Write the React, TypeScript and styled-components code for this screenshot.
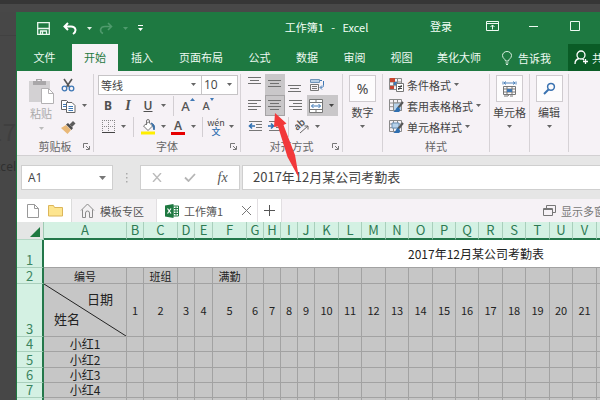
import React from "react";
import styled, { createGlobalStyle, css } from "styled-components";

const GREEN = "#1e7941";
const SANS = '"Noto Sans CJK SC", "Noto Sans", sans-serif';

const GlobalStyle = createGlobalStyle`
  * { box-sizing: border-box; }
  html, body { margin: 0; height: 100%; }
  #root { height: 100%; }
  body { font: 11px/14px ${SANS}; color: #444; background: #474747; overflow: hidden; }
  button, input, select { font: inherit; color: inherit; margin: 0; padding: 0; border: 0; background: none; border-radius: 0; }
  svg { display: block; flex: none; }
`;

/* Page frame */
const Desktop = styled.div`
  display: flex;
  flex-direction: column;
  min-height: 100%;
  height: 100%;
  overflow: hidden;
`;
const TopStrip = styled.div`
  flex: none;
  height: 12px;
  background: #484848;
  border-top: 4px solid #363636;
`;
const Body = styled.div`
  flex: 1;
  display: flex;
  min-height: 0;
`;
const Rail = styled.aside`
  flex: none;
  width: 16px;
  margin-top: 23px;
  padding-top: 80px;
  border-top: 1px solid #414141;
  overflow: hidden;
  display: flex;
  flex-direction: column;
  align-items: flex-end;
  gap: 13px;
  background: #474747;
  white-space: nowrap;
`;
const RailTitle = styled.span`
  font-size: 24px;
  line-height: 30px;
  color: #3f3f3f;
`;
const RailText = styled.span`
  font: 12px/16px "Noto Sans", sans-serif;
  color: #303030;
`;
const Window = styled.main`
  position: relative;
  flex: 1;
  min-width: 0;
  margin-right: -36px;
  border-left: 1px solid ${GREEN};
  background: #e6e6e6;
  overflow: hidden;
`;

/* Title bar */
const TitleBar = styled.header`
  display: grid;
  grid-template-columns: 1fr auto 1fr;
  align-items: start;
  height: 32px;
  background: ${GREEN};
  color: #f2fff6;
`;
const QuickAccess = styled.div`
  display: flex;
  align-items: center;
  height: 32px;
  padding-left: 16px;
`;
const TitleText = styled.h1`
  margin: 0;
  font-size: 11px;
  line-height: 30px;
  font-weight: 400;
  white-space: pre;
`;
const WindowButtons = styled.div`
  display: flex;
  justify-content: flex-end;
  align-items: center;
  height: 28px;
`;
const WindowButton = styled.button`
  flex: none;
  width: 41px;
  height: 28px;
  display: flex;
  align-items: center;
  justify-content: center;
`;
const SignIn = styled.button`
  margin-right: 20px;
`;

/* Ribbon tabs */
const Tabs = styled.nav`
  display: flex;
  height: 27px;
  background: ${GREEN};
  color: #eefaf2;
`;
const Tab = styled.button<{ $w: number; $active?: boolean }>`
  flex: none;
  width: ${(p) => p.$w}px;
  height: 27px;
  padding-bottom: 2px;
  white-space: nowrap;
  ${(p) => p.$active && css`background: #f6f2f6; color: ${GREEN};`}
`;
const TellMe = styled.button`
  display: flex;
  align-items: center;
  gap: 6px;
  padding-left: 9px;
  white-space: nowrap;
`;
const Share = styled.button`
  display: flex;
  align-items: center;
  gap: 3px;
  width: 68px;
  margin-left: auto;
  padding-left: 6px;
  background: #0a5c26;
  white-space: nowrap;
`;

/* Ribbon */
const Ribbon = styled.section`
  display: flex;
  height: 85px;
  padding: 3px 0;
  background: #f6f2f6;
  border-bottom: 1px solid #d2d0d2;
`;
const Group = styled.section<{ $w: number }>`
  flex: none;
  display: flex;
  flex-direction: column;
  width: ${(p) => p.$w}px;
  border-right: 1px solid #d6d2d6;
`;
const GroupBody = styled.div<{ $pad?: number }>`
  flex: none;
  height: 63px;
  padding-left: ${(p) => p.$pad ?? 0}px;
`;
const GroupLabel = styled.footer`
  display: grid;
  grid-template-columns: 1fr auto 1fr;
  align-items: center;
  justify-items: end;
  height: 18px;
  padding: 1px 3px 0;
  line-height: 16px;
  color: #666;
`;
const ToolRow = styled.div`
  display: flex;
  align-items: center;
  height: 21px;
`;
const Tool = styled.button<{ $w?: number; $on?: boolean; $framed?: boolean }>`
  flex: none;
  display: flex;
  align-items: center;
  justify-content: center;
  gap: 2px;
  width: ${(p) => p.$w ?? 20}px;
  height: 21px;
  background: ${(p) => (p.$on ? "#c9c7c9" : "transparent")};
  border: ${(p) => (p.$framed ? "1px solid #a5a3a5" : "0")};
`;
const ToolDivider = styled.span<{ $w?: number }>`
  flex: none;
  width: ${(p) => p.$w ?? 10}px;
  height: 20px;
  background: linear-gradient(#d2ced2, #d2ced2) center / 1px 100% no-repeat;
`;
const Letter = styled.span<{ $kind: "bold" | "italic" | "under" }>`
  font: 700 12px/16px "Noto Sans", sans-serif;
  color: #505050;
  ${(p) => p.$kind === "italic" && css`font-family: "Liberation Serif", serif; font-style: italic; font-size: 14px;`}
  ${(p) => p.$kind === "under" && css`text-decoration: underline; font-weight: 600;`}
`;
const Combo = styled.label<{ $w: number }>`
  flex: none;
  display: flex;
  align-items: center;
  width: ${(p) => p.$w}px;
  height: 20px;
  padding: 0 5px 0 2px;
  margin-right: -1px;
  background: #fff;
  border: 1px solid #c6c4c6;
`;
const ComboSelect = styled.select<{ $latin?: boolean }>`
  appearance: none;
  flex: 1;
  min-width: 0;
  height: 18px;
  color: #444;
  ${(p) => p.$latin && css`font: 12px/16px "Open Sans", sans-serif;`}
`;
const ClipboardGrid = styled.div`
  display: grid;
  grid-template-columns: 32px 1fr;
  padding-left: 8px;
`;
const BigTool = styled.button`
  display: flex;
  flex-direction: column;
  align-items: center;
  gap: 1px;
  padding-top: 4px;
  color: #aaa;
`;
const TileTool = styled.button`
  display: flex;
  flex-direction: column;
  align-items: center;
  width: 100%;
  color: #444;
  white-space: nowrap;
`;
const Tile = styled.span`
  display: flex;
  align-items: center;
  justify-content: center;
  width: 27px;
  height: 27px;
  margin: 1px 0 3px;
  background: #fdfcfd;
  border: 1px solid #cfcbcf;
`;
const Percent = styled.span`
  font: 14px/20px "Noto Sans", sans-serif;
  color: #444;
`;
const TileCaret = styled.span`
  padding-top: 6px;
`;
const StyleTool = styled.button`
  display: flex;
  align-items: center;
  gap: 3px;
  height: 21px;
  white-space: nowrap;
`;

/* Formula bar */
const FormulaBar = styled.section`
  display: flex;
  align-items: center;
  height: 43px;
  padding-left: 4px;
  background: #e6e6e6;
`;
const NameBox = styled.label`
  flex: none;
  display: flex;
  align-items: center;
  width: 92px;
  height: 25px;
  padding: 0 6px;
  background: #fff;
  border: 1px solid #cfcfcf;
`;
const NameInput = styled.input`
  flex: 1;
  min-width: 0;
  font: 12px/16px "Open Sans", "Noto Sans", sans-serif;
  outline: 0;
`;
const Grip = styled.span`
  flex: none;
  width: 27px;
  display: flex;
  justify-content: center;
`;
const FormulaTools = styled.div`
  flex: none;
  display: grid;
  grid-template-columns: repeat(3, 1fr);
  width: 100px;
  height: 25px;
  background: #fff;
  border: 1px solid #cfcfcf;
`;
const FxText = styled.span`
  font: italic 400 14px/16px "Liberation Serif", serif;
  color: #555;
`;
const FormulaInput = styled.input`
  flex: 1;
  min-width: 0;
  height: 25px;
  margin-left: 2px;
  padding: 0 0 2px 10px;
  border: 1px solid #cfcfcf;
  background: #fff;
  font-size: 13px;
  line-height: 20px;
  color: #444;
  outline: 0;
`;

/* Workbook tabs */
const BookTabs = styled.nav`
  display: flex;
  height: 23px;
  background: #f6f2f6;
`;
const FileIcons = styled.div`
  display: flex;
  align-items: center;
  width: 55px;
  padding-left: 9px;
  gap: 8px;
  background: #fff;
  border-right: 1px solid #dcdcdc;
`;
const IconButton = styled.button`
  display: flex;
  align-items: center;
  justify-content: center;
`;
const BookTab = styled.div<{ $w: number; $active?: boolean }>`
  flex: none;
  display: flex;
  align-items: center;
  width: ${(p) => p.$w}px;
  padding: 0 6px 0 8px;
  white-space: nowrap;
  background: ${(p) => (p.$active ? "#fff" : "#f3f1f3")};
  border-right: 1px solid #e2dfe2;
`;
const BookName = styled.button`
  display: flex;
  align-items: center;
  gap: 5px;
  margin-right: auto;
  color: #555;
`;
const AddTab = styled.button`
  flex: none;
  width: 24px;
  display: flex;
  align-items: center;
  justify-content: center;
  background: #fff;
  border-right: 1px solid #e2dfe2;
`;
const ShowWindows = styled.button`
  display: flex;
  align-items: center;
  gap: 5px;
  margin-left: auto;
  padding-right: 20px;
  color: #777;
  white-space: nowrap;
`;

/* Sheet */
const SheetFrame = styled.div`
  overflow: hidden;
`;
const Sheet = styled.table`
  table-layout: fixed;
  border-collapse: separate;
  border-spacing: 0;
`;
const SheetRow = styled.tr<{ $h: number }>`
  height: ${(p) => p.$h}px;
`;
const Corner = styled.td`
  padding: 0;
  background: #e4e6e5;
  border-bottom: 1px solid #b4d8c5;
  border-right: 1px solid #9fcbb4;
`;
const CornerButton = styled.button`
  display: flex;
  justify-content: flex-end;
  width: 100%;
  padding: 3px 3px 0 0;
`;
const ColHead = styled.th`
  padding: 0;
  height: 18px;
  background: #d4f1e3;
  border-right: 1px solid #a9cfbc;
  border-bottom: 2px solid #23774a;
  color: #2e7a53;
  font-size: 13px;
  line-height: 16px;
  font-weight: 400;
`;
const RowHead = styled.th`
  padding: 0;
  background: #d4f1e3;
  border-bottom: 1px solid #a9cfbc;
  border-right: 2px solid #23774a;
  color: #3b8560;
  font-size: 13px;
  line-height: 14px;
  font-weight: 400;
  text-align: center;
  vertical-align: bottom;
`;
const Cell = styled.td`
  padding: 0;
  overflow: hidden;
  background: #c6c6c6;
  border-right: 1px solid #a2a2a2;
  border-bottom: 1px solid #a2a2a2;
  color: #222;
  font-size: 11px;
  line-height: 14px;
  text-align: center;
  vertical-align: middle;
  white-space: nowrap;
`;
const NameCell = styled(Cell)`
  font-size: 12px;
`;
const TitleCell = styled(Cell)`
  background: #fff;
  font-size: 12px;
  line-height: 16px;
`;
const SplitCell = styled(Cell)`
  font-size: 13px;
  line-height: 20px;
`;
const SplitBox = styled.div`
  position: relative;
  display: flex;
  flex-direction: column;
  justify-content: center;
  height: 52px;
  padding: 0 13px 2px 10px;
`;
const SplitLine = styled.svg`
  position: absolute;
  inset: 0;
  width: 100%;
  height: 100%;
`;
const SplitText = styled.span<{ $end?: boolean }>`
  text-align: ${(p) => (p.$end ? "right" : "left")};
`;

const Pointer = styled.svg`
  position: absolute;
  left: 253px;
  top: 100px;
  pointer-events: none;
`;

/* Icons */
const Caret = ({ color = "#666" }: { color?: string }) => (
  <svg width="5" height="3" viewBox="0 0 5 3"><path d="M0 0h5L2.5 3z" fill={color} /></svg>
);

const CaretTool = ({ label }: { label: string }) => (
  <Tool $w={10} aria-label={label}><Caret /></Tool>
);

const Lines = ({ rows, y }: { rows: [number, number][]; y: number }) => (
  <svg width="14" height="17" viewBox="0 0 14 17" stroke="#707070" shapeRendering="crispEdges">
    {rows.map(([a, b], i) => <path key={i} d={`M${a} ${y + i * 3 + 0.5}H${b}`} />)}
  </svg>
);

const Indent = ({ out }: { out?: boolean }) => (
  <svg width="15" height="13" viewBox="0 0 15 13">
    <path d="M1 1.5h13M8 4.5h6M8 7.5h6M1 10.5h13" stroke="#777" />
    <path d={out ? "M7 6H1.5M4 3.5L1.5 6 4 8.5" : "M0 6h5.5M3 3.5L5.5 6 3 8.5"} stroke="#2f6fb0" strokeWidth="1.6" fill="none" />
  </svg>
);

const Launcher = ({ label }: { label: string }) => (
  <IconButton aria-label={label}>
    <svg width="7" height="7" viewBox="0 0 7 7" fill="none" stroke="#777"><path d="M.5 5V.5H5M3 3l3 3M6.5 3v3.5H3" /></svg>
  </IconButton>
);

const Label = ({ text, launcher }: { text: string; launcher?: boolean }) => (
  <GroupLabel><span /><span>{text}</span>{launcher && <Launcher label={`${text}设置`} />}</GroupLabel>
);

const GridStyle = ({ kind }: { kind: "cond" | "table" | "cell" }) => (
  <svg width="15" height="15" viewBox="0 0 15 15" fill="none">
    <path d="M.5 1.5h12v11H.5zM.5 5h12M.5 8.7h12M4.5 1.5v11M8.500 1.5v11" stroke="#8a8a8a" />
    {kind === "cond" && (
      <>
        <path d="M1 1h5v4H1zM1 9h4v3H1z" fill="#c8452f" />
        <path d="M5 5h3v3H5z" fill="#3e78b8" />
        <path d="M7.5 6.5h7v8h-7z" fill="#fff" stroke="#777" />
        <path d="M9 9.5h4M9 11.5h4M12.5 8l-3 5" stroke="#444" />
      </>
    )}
    {kind === "table" && <path d="M4.5 5h8v7.5h-8z" fill="#b8d2ea" stroke="#8a8a8a" />}
    {kind === "cell" && <path d="M3 4h7v5H3z" fill="#b8d2ea" stroke="#6b8fb4" />}
    {kind !== "cond" && (
      <>
        <path d="M14 4l-5 6" stroke="#555" strokeWidth="2" />
        <path d="M9 9c-2 0-2 4-5 5h6c2-1 1-4-1-5z" fill="#2f6fb0" />
      </>
    )}
  </svg>
);

const PasteIcon = () => (
  <svg width="27" height="27" viewBox="0 0 27 27">
    <path d="M1 3h21v21H1z" fill="#d3d1d3" />
    <path d="M5 3h3V1h6v2h4v4H5z" fill="#a9a7a9" />
    <path d="M9.5 2.5h3" stroke="#f6f2f6" />
    <path d="M13.5 10.500h7l5 5v10h-12z" fill="#fff" stroke="#b3b1b3" />
    <path d="M20.5 10.5v5h5" fill="none" stroke="#b3b1b3" />
  </svg>
);
const CutIcon = () => (
  <svg width="14" height="14" viewBox="0 0 14 14" fill="none">
    <path d="M3 1l5.5 8M11 1L5.500 9" stroke="#555" strokeWidth="1.6" />
    <circle cx="3.5" cy="10.5" r="2.3" stroke="#3f78b5" strokeWidth="1.3" />
    <circle cx="10.5" cy="10.5" r="2.3" stroke="#3f78b5" strokeWidth="1.3" />
  </svg>
);
const CopyIcon = () => (
  <svg width="15" height="14" viewBox="0 0 15 14" fill="#fff" stroke="#666">
    <path d="M.5 1.5h5l2.5 2.5v6.5H.5z" />
    <path d="M2 5.5h4M2 7.5h4" stroke="#3f78b5" />
    <path d="M5.5 3.5h5.5l3 3v7H5.500z" />
    <path d="M7.5 7.5h4.5M7.5 9.5h4.5M7.5 11.5h4.5" stroke="#3f78b5" />
  </svg>
);
const BrushIcon = () => (
  <svg width="15" height="14" viewBox="0 0 15 14">
    <path d="M0 8l5-3 5 5-3.500 4z" fill="#e9b877" />
    <path d="M5 4.500L7 3l5 5-1.500 2z" fill="#4c4c4c" />
    <path d="M8.500 4.500L12 1l2.500 2.500L11 7z" fill="#5c5c5c" />
  </svg>
);
const BordersIcon = () => (
  <svg width="13" height="13" viewBox="0 0 13 13" stroke="#888" fill="none">
    <path d="M.5 0v12M6.5 0v12M12.5 0v12M0 .5h13M0 6.5h13" strokeDasharray="1 1" />
    <path d="M0 12.5h13" stroke="#444" />
  </svg>
);
const FillIcon = () => (
  <svg width="16" height="16" viewBox="0 0 16 16">
    <path d="M3.5 7l5-4 4 4L8 11.500z" fill="#fff" stroke="#777" />
    <path d="M6.5 6V2a1.5 1.5 0 013 0v2" fill="none" stroke="#777" />
    <path d="M11 4c4 1 4 5 3 7-1-3-1-5-3-7z" fill="#3b6fa5" stroke="#3b6fa5" />
    <path d="M1 12.5h14v3H1z" fill="#ffee00" />
  </svg>
);
const ColorMark = styled.span`
  width: 14px;
  height: 16px;
  font: 600 12px/13px "Noto Sans", sans-serif;
  color: #555;
  border-bottom: 3px solid #e60000;
`;
const SizeLetter = styled.span<{ $small?: boolean }>`
  display: flex;
  font: 500 ${(p) => (p.$small ? 11 : 13)}px/16px "Noto Sans", sans-serif;
  color: #555;
`;
const Phonetic = styled.span`
  display: flex;
  flex-direction: column;
  font-size: 9px;
  line-height: 9px;
  color: #444;
`;
const PhoneticBase = styled.span`
  color: #2f6fb0;
  font-weight: 500;
`;

const WrapIcon = () => (
  <svg width="15" height="14" viewBox="0 0 15 14" fill="none">
    <path d="M.5 1.5h9v3h-9z" fill="#b9cfe6" stroke="#6f93b8" />
    <path d="M.5 6.5h8v6h-8zM2 8.5h5M2 10.5h5" stroke="#777" />
    <path d="M10 2.5h2M13.5 3v4.5c0 1.500-1 2-3 2M12 7.5l-2 2 2 2" stroke="#3f78b5" />
  </svg>
);
const MergeIcon = () => (
  <svg width="14" height="14" viewBox="0 0 14 14" fill="none">
    <path d="M.5.5h13v13H.5z" fill="#fff" stroke="#777" />
    <path d="M.5 3.5h13M.5 10.5h13M7 .5v3M7 10.5v3" stroke="#777" />
    <path d="M2.5 7h9M4.500 5l-2 2 2 2M9.5 5l2 2-2 2" stroke="#3f78b5" />
  </svg>
);
const OrientIcon = () => (
  <svg width="15" height="15" viewBox="0 0 15 15">
    <text x="0" y="9" transform="rotate(-42 5 8)" fontFamily="Noto Sans" fontSize="10" fontWeight="600" fill="#555">ab</text>
    <path d="M5 14l8-7M9.5 7H13v3.500" stroke="#666" fill="none" />
  </svg>
);
const CellsIcon = () => (
  <svg width="15" height="16" viewBox="0 0 15 16" fill="none">
    <path d="M2 2h11M4 .5L2 2l2 1.500M11 .5L13 2l-2 1.500M1 .5v3M14 .5v3" stroke="#3f78b5" strokeWidth=".9" />
    <path d="M1.5 5.5h12v8h-12zM1.5 8h12M1.5 11h12M5 5.5v8M10 5.5v8" stroke="#777" />
    <path d="M5 8h5v3H5z" fill="#3f78b5" />
    <path d="M2 15h4l1-1.500M8 15h3" stroke="#777" />
  </svg>
);
const FindIcon = () => (
  <svg width="13" height="13" viewBox="0 0 13 13" fill="none" stroke="#3a72b0">
    <circle cx="8" cy="4.8" r="3.4" strokeWidth="1.5" />
    <path d="M5.5 7.5L1 12" strokeWidth="2" />
  </svg>
);

const SaveIcon = () => (
  <svg width="13" height="13" viewBox="0 0 13 13" fill="none" stroke="#e9f7ee" strokeWidth="1.3">
    <path d="M.7.7h11.6v11.6H.7zM.7 6.500h11.6M3.5 12V9h6v3M5.500 9.5V12" />
  </svg>
);
const UndoIcon = ({ flip }: { flip?: boolean }) => (
  <svg width="14" height="13" viewBox="0 0 14 13" fill="none" stroke={flip ? "#4f9a6d" : "#fff"} strokeWidth="2">
    {flip ? <path d="M9 1l3.500 3.500L9 8M12 4.500H6c-5 0-6 5-2 7" strokeWidth="1.600" /> : <path d="M5 1L1.500 4.500 5 8M2 4.500h6c5 0 6 5 2 7.500" />}
  </svg>
);

/* Data */
const COLS: [string, number][] = [
  ["A", 83], ["B", 17], ["C", 34], ["D", 17], ["E", 18], ["F", 34], ["G", 17], ["H", 17], ["I", 17], ["J", 17],
  ["K", 24], ["L", 23], ["M", 24], ["N", 23], ["O", 24], ["P", 23], ["Q", 23], ["R", 24], ["S", 23], ["T", 24],
  ["U", 23], ["V", 24], ["W", 24], ["X", 24], ["Y", 24], ["Z", 24], ["AA", 24], ["AB", 24], ["AC", 24], ["AD", 24],
  ["AE", 24], ["AF", 24], ["AG", 24], ["AH", 24], ["AI", 24],
];
const SHEET_WIDTH = COLS.reduce((sum, [, w]) => sum + w, 27);
const DAY_COLS = COLS.slice(1);
const HEADINGS: Record<string, string> = { C: "班组", F: "满勤" };
const PEOPLE: [number, string, number][] = [
  [4, "小红1", 15], [5, "小红2", 16], [6, "小红3", 15], [7, "小红4", 15], [8, "小红5", 16],
];
const MENU: [string, number][] = [
  ["插入", 48], ["页面布局", 70], ["公式", 47], ["数据", 48], ["审阅", 47], ["视图", 47], ["美化大师", 68],
];

export default function App() {
  return (
    <Desktop>
      <GlobalStyle />
      <TopStrip />
      <Body>
        <Rail>
          <RailTitle>17</RailTitle>
          <RailText>xcel</RailText>
        </Rail>
        <Window>
          <TitleBar>
            <QuickAccess>
              <Tool aria-label="保存"><SaveIcon /></Tool>
              <Tool $w={34} aria-label="撤消"><UndoIcon /></Tool>
              <Tool $w={5} aria-label="撤消列表"><Caret color="#dff0e6" /></Tool>
              <Tool $w={28} aria-label="恢复"><UndoIcon flip /></Tool>
              <Tool $w={10} aria-label="恢复列表"><Caret color="#4f9a6d" /></Tool>
              <Tool aria-label="自定义快速访问工具栏">
                <svg width="5" height="6" viewBox="0 0 5 6" fill="#fff"><path d="M0 0h5v1H0zM0 3h5L2.5 6z" /></svg>
              </Tool>
            </QuickAccess>
            <TitleText>{"工作簿1   -   Excel"}</TitleText>
            <WindowButtons>
              <SignIn>登录</SignIn>
              <WindowButton aria-label="功能区显示选项">
                <svg width="13" height="10" viewBox="0 0 13 10" fill="none" stroke="#eefaf2"><path d="M.5.5h12v9H.5zM.5 2.5h12M6.5 8.5V4M4.5 6l2-2 2 2" /></svg>
              </WindowButton>
              <WindowButton aria-label="最小化">
                <svg width="9" height="1" viewBox="0 0 9 1"><path d="M0 0h9v1H0z" fill="#eefaf2" /></svg>
              </WindowButton>
              <WindowButton aria-label="最大化">
                <svg width="10" height="10" viewBox="0 0 10 10"><path d="M.5.5h9v9h-9z" fill="none" stroke="#eefaf2" /></svg>
              </WindowButton>
              <WindowButton aria-label="关闭">
                <svg width="10" height="10" viewBox="0 0 10 10"><path d="M0 0l10 10M10 0L0 10" stroke="#eefaf2" /></svg>
              </WindowButton>
            </WindowButtons>
          </TitleBar>

          <Tabs>
            <Tab $w={55}>文件</Tab>
            <Tab $w={46} $active>开始</Tab>
            {MENU.map(([name, w]) => <Tab key={name} $w={w}>{name}</Tab>)}
            <TellMe>
              <svg width="10" height="14" viewBox="0 0 10 14" fill="none" stroke="#d9efe1"><path d="M3.5 10c0-2-3-2.500-3-5.500a4.500 4 0 019 0c0 3-3 3.500-3 5.500zM3.500 12h3M4 13.500h2" /></svg>
              告诉我
            </TellMe>
            <Share>
              <svg width="15" height="15" viewBox="0 0 15 15" fill="none" stroke="#fff" strokeWidth="1.3"><circle cx="7" cy="5" r="4" /><path d="M1 14c0-3 2-5 4-5.500M8.500 9l1.500 1M11.500 9v5M9 11.500h5" /></svg>
              共享
            </Share>
          </Tabs>

          <Ribbon>
            <Group $w={77}>
              <GroupBody>
                <ClipboardGrid>
                  <BigTool>
                    <PasteIcon />
                    <span>粘贴</span>
                    <TileCaret><Caret color="#bbb" /></TileCaret>
                  </BigTool>
                  <div>
                    <ToolRow><Tool $w={22} aria-label="剪切"><CutIcon /></Tool></ToolRow>
                    <ToolRow><Tool $w={22} aria-label="复制"><CopyIcon /></Tool><CaretTool label="复制选项" /></ToolRow>
                    <ToolRow><Tool $w={22} aria-label="格式刷"><BrushIcon /></Tool></ToolRow>
                  </div>
                </ClipboardGrid>
              </GroupBody>
              <Label text="剪贴板" launcher />
            </Group>

            <Group $w={147}>
              <GroupBody $pad={4}>
                <ToolRow>
                  <Combo $w={104}>
                    <ComboSelect aria-label="字体"><option>等线</option></ComboSelect><Caret />
                  </Combo>
                  <Combo $w={37}>
                    <ComboSelect $latin aria-label="字号"><option>10</option></ComboSelect><Caret />
                  </Combo>
                </ToolRow>
                <ToolRow>
                  <Tool aria-label="加粗"><Letter $kind="bold">B</Letter></Tool>
                  <Tool aria-label="倾斜"><Letter $kind="italic">I</Letter></Tool>
                  <Tool aria-label="下划线"><Letter $kind="under">U</Letter></Tool>
                  <CaretTool label="下划线选项" />
                  <ToolDivider />
                  <Tool aria-label="增大字号"><SizeLetter>A<svg width="5" height="3"><path d="M0 3h5L2.5 0z" fill="#3f78b5" /></svg></SizeLetter></Tool>
                  <Tool aria-label="减小字号"><SizeLetter $small>A<svg width="4" height="3"><path d="M0 0h4L2 3z" fill="#3f78b5" /></svg></SizeLetter></Tool>
                </ToolRow>
                <ToolRow>
                  <Tool aria-label="边框"><BordersIcon /></Tool>
                  <CaretTool label="边框选项" />
                  <ToolDivider />
                  <Tool aria-label="填充颜色"><FillIcon /></Tool>
                  <CaretTool label="填充颜色选项" />
                  <Tool aria-label="字体颜色"><ColorMark>A</ColorMark></Tool>
                  <CaretTool label="字体颜色选项" />
                  <ToolDivider $w={8} />
                  <Tool aria-label="拼音"><Phonetic>wén<PhoneticBase>文</PhoneticBase></Phonetic></Tool>
                  <CaretTool label="拼音选项" />
                </ToolRow>
              </GroupBody>
              <Label text="字体" launcher />
            </Group>

            <Group $w={102}>
              <GroupBody $pad={4}>
                <ToolRow>
                  <Tool aria-label="顶端对齐"><Lines y={1} rows={[[0, 13], [2, 11], [0, 13]]} /></Tool>
                  <Tool $on aria-label="垂直居中"><Lines y={4} rows={[[0, 13], [2, 11], [0, 13]]} /></Tool>
                  <Tool aria-label="底端对齐"><Lines y={9} rows={[[0, 13], [2, 11], [0, 13]]} /></Tool>
                  <Tool $w={24} aria-label="自动换行"><WrapIcon /></Tool>
                </ToolRow>
                <ToolRow>
                  <Tool aria-label="左对齐"><Lines y={3} rows={[[0, 13], [0, 9], [0, 13], [0, 9]]} /></Tool>
                  <Tool $on $framed aria-label="居中"><Lines y={3} rows={[[0, 13], [2, 11], [0, 13], [2, 11]]} /></Tool>
                  <Tool $w={22} aria-label="右对齐"><Lines y={3} rows={[[0, 13], [4, 13], [0, 13], [4, 13]]} /></Tool>
                  <Tool $w={18} $on aria-label="合并后居中"><MergeIcon /></Tool>
                  <Tool $w={13} $on aria-label="合并选项"><Caret color="#444" /></Tool>
                </ToolRow>
                <ToolRow>
                  <Tool aria-label="减少缩进量"><Indent out /></Tool>
                  <Tool aria-label="增加缩进量"><Indent /></Tool>
                  <ToolDivider $w={7} />
                  <Tool aria-label="方向"><OrientIcon /></Tool>
                  <CaretTool label="方向选项" />
                </ToolRow>
              </GroupBody>
              <Label text="对齐方式" launcher />
            </Group>

            <Group $w={40}>
              <TileTool>
                <Tile><Percent>%</Percent></Tile>
                数字
                <TileCaret><Caret /></TileCaret>
              </TileTool>
            </Group>

            <Group $w={107}>
              <GroupBody $pad={6}>
                <StyleTool><GridStyle kind="cond" />条件格式<Caret /></StyleTool>
                <StyleTool><GridStyle kind="table" />套用表格格式<Caret /></StyleTool>
                <StyleTool><GridStyle kind="cell" />单元格样式<Caret /></StyleTool>
              </GroupBody>
              <Label text="样式" />
            </Group>

            <Group $w={40}>
              <TileTool><Tile><CellsIcon /></Tile>单元格<TileCaret><Caret /></TileCaret></TileTool>
            </Group>
            <Group $w={39}>
              <TileTool><Tile><FindIcon /></Tile>编辑<TileCaret><Caret /></TileCaret></TileTool>
            </Group>
          </Ribbon>

          <FormulaBar>
            <NameBox>
              <NameInput aria-label="名称框" defaultValue="A1" />
              <svg width="7" height="4" viewBox="0 0 7 4"><path d="M0 0h7L3.5 4z" fill="#777" /></svg>
            </NameBox>
            <Grip><svg width="2" height="10" viewBox="0 0 2 10" fill="#aaa"><path d="M0 0h1.5v1.5H0zM0 4h1.5v1.5H0zM0 8h1.5v1.5H0z" /></svg></Grip>
            <FormulaTools>
              <IconButton aria-label="取消"><svg width="10" height="9" viewBox="0 0 10 9"><path d="M1 0l8 9M9 0L1 9" stroke="#bbb" strokeWidth="1.4" /></svg></IconButton>
              <IconButton aria-label="输入"><svg width="12" height="9" viewBox="0 0 12 9"><path d="M1 4.5L4.5 8 11 1" fill="none" stroke="#b5b5b5" strokeWidth="1.8" /></svg></IconButton>
              <IconButton aria-label="插入函数"><FxText>fx</FxText></IconButton>
            </FormulaTools>
            <FormulaInput aria-label="编辑栏" defaultValue="2017年12月某公司考勤表" />
          </FormulaBar>

          <BookTabs>
            <FileIcons>
              <IconButton aria-label="新建"><svg width="14" height="15" viewBox="0 0 14 15" fill="none" stroke="#999"><path d="M1.5 1.5h7l4 4v9h-11zM8.5 1.5v4h4" /></svg></IconButton>
              <IconButton aria-label="打开"><svg width="15" height="13" viewBox="0 0 15 13"><path d="M.5 1.5h5l1 2h8V12H.5z" fill="#fde58f" stroke="#dcb65a" /></svg></IconButton>
            </FileIcons>
            <BookTab $w={85}>
              <BookName>
                <svg width="15" height="15" viewBox="0 0 15 15" fill="none" stroke="#8a8a8a"><path d="M1 7.5L7.5 1 14 7.500M2.500 6.500v8h3V10a2 2 0 014 0v4.500h3v-8" /></svg>
                模板专区
              </BookName>
            </BookTab>
            <BookTab $w={101} $active>
              <BookName>
                <svg width="14" height="14" viewBox="0 0 14 14">
                  <path d="M8 2h5.5v10H8z" fill="#fff" stroke="#1e7941" />
                  <path d="M9 4.5h4M9 7h4M9 9.5h4M11 2.5v9" stroke="#1e7941" />
                  <path d="M0 1.5L8.500 0v14L0 12.500z" fill="#1e7941" />
                  <path d="M2.5 4.5l3.500 5M6 4.500l-3.500 5" stroke="#fff" strokeWidth="1.2" />
                </svg>
                工作簿1
              </BookName>
              <IconButton aria-label="关闭工作簿"><svg width="9" height="9" viewBox="0 0 9 9"><path d="M0 0l9 9M9 0L0 9" stroke="#777" /></svg></IconButton>
            </BookTab>
            <AddTab aria-label="新建标签"><svg width="11" height="11" viewBox="0 0 11 11"><path d="M0 5.5h11M5.5 0v11" stroke="#555" /></svg></AddTab>
            <ShowWindows>
              <svg width="13" height="11" viewBox="0 0 13 11" fill="none" stroke="#777"><path d="M3.5 3V.5h9v7H10M.5 3.5h9v7h-9zM.5 4.5h9" /></svg>
              显示多窗口
            </ShowWindows>
          </BookTabs>

          <SheetFrame>
            <Sheet width={SHEET_WIDTH}>
              <colgroup>
                <col width={27} />
                {COLS.map(([name, w]) => <col key={name} width={w} />)}
              </colgroup>
              <thead>
                <SheetRow $h={18}>
                  <Corner>
                    <CornerButton aria-label="全选"><svg width="10" height="10" viewBox="0 0 10 10"><path d="M10 0v10H0z" fill="#1e7941" /></svg></CornerButton>
                  </Corner>
                  {COLS.map(([name]) => <ColHead key={name} scope="col">{name}</ColHead>)}
                </SheetRow>
              </thead>
              <tbody>
                <SheetRow $h={28}>
                  <RowHead scope="row">1</RowHead>
                  <TitleCell colSpan={COLS.length}>2017年12月某公司考勤表</TitleCell>
                </SheetRow>
                <SheetRow $h={16}>
                  <RowHead scope="row">2</RowHead>
                  <Cell>编号</Cell>
                  {DAY_COLS.map(([name]) => <Cell key={name}>{HEADINGS[name]}</Cell>)}
                </SheetRow>
                <SheetRow $h={53}>
                  <RowHead scope="row">3</RowHead>
                  <SplitCell>
                    <SplitBox>
                      <SplitLine viewBox="0 0 82 52" preserveAspectRatio="none"><path d="M0 0l82 52" stroke="#222" /></SplitLine>
                      <SplitText $end>日期</SplitText>
                      <SplitText>姓名</SplitText>
                    </SplitBox>
                  </SplitCell>
                  {DAY_COLS.map(([name], i) => <Cell key={name}>{i < 31 ? i + 1 : ""}</Cell>)}
                </SheetRow>
                {PEOPLE.map(([n, person, h]) => (
                  <SheetRow key={n} $h={h}>
                    <RowHead scope="row">{n}</RowHead>
                    <NameCell>{person}</NameCell>
                    {DAY_COLS.map(([name]) => <Cell key={name} />)}
                  </SheetRow>
                ))}
              </tbody>
            </Sheet>
          </SheetFrame>

          <Pointer width="32" height="68" viewBox="0 0 32 68">
            <path d="M5 1L16.5 11.5 13.5 13 25 43 29 66 17.5 45 8 14.5 4 15z" fill="#f2383a" />
          </Pointer>
        </Window>
      </Body>
    </Desktop>
  );
}
